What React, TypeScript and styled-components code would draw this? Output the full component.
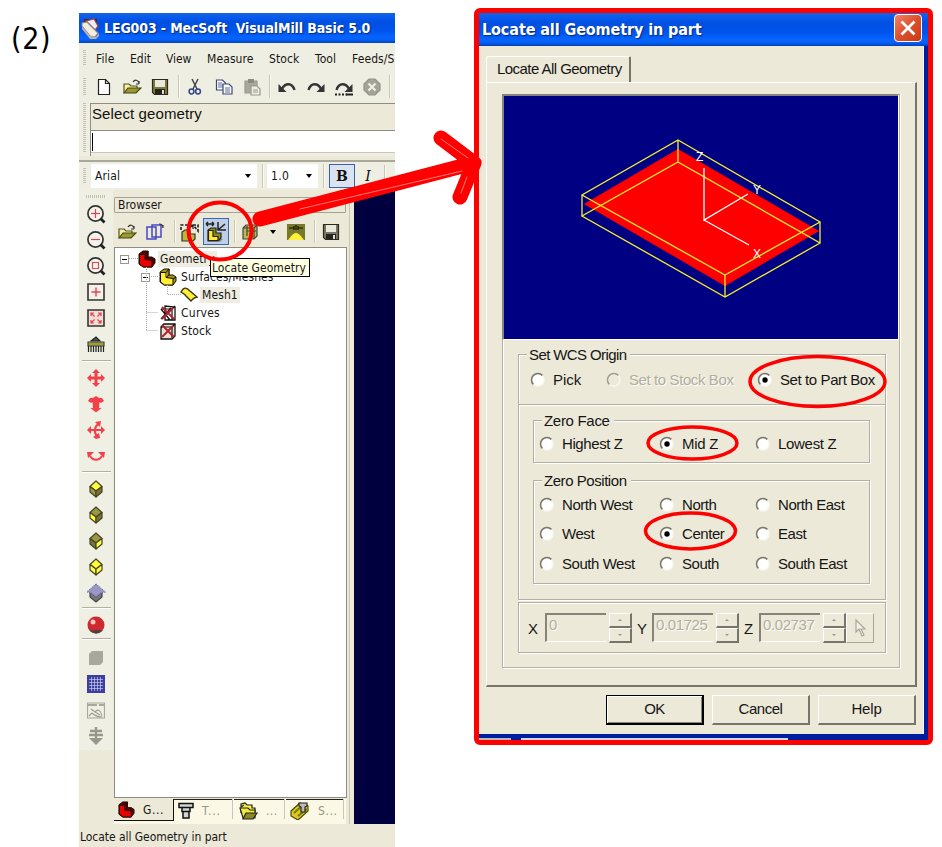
import React from "react";
import styled, { createGlobalStyle } from "styled-components";

const face = "#ece9d8";
const tahoma = `"DejaVu Sans Condensed", "DejaVu Sans", sans-serif`;
const sans = `"Liberation Sans", Arial, sans-serif`;

const GlobalStyle = createGlobalStyle`
  * { box-sizing: border-box; }
  body { margin: 0; background: #fff; overflow: hidden; }
`;

const Page = styled.main`
  position: relative;
  display: flex;
  align-items: flex-start;
  width: 942px;
  height: 847px;
  background: #fff;
  color: #111;
  overflow: hidden;
`;

const Text = styled.span<{ $ls?: number; $size?: number; $color?: string }>`
  font-family: ${tahoma};
  font-size: ${(p) => p.$size ?? 12}px;
  letter-spacing: ${(p) => p.$ls ?? 0}px;
  color: ${(p) => p.$color ?? "#161616"};
  white-space: pre;
  line-height: 16px;
`;

const Step = styled.div`
  width: 79px;
  padding: 20px 0 0 11px;
  font: 30px/38px ${tahoma};
  letter-spacing: 0.6px;
  color: #000;
`;

/* ---------- application window ---------- */

const MillWindow = styled.section`
  display: flex;
  flex-direction: column;
  width: 316px;
  height: 834px;
  margin-top: 13px;
  background: ${face};
  overflow: hidden;
`;

const TitleBar = styled.header<{ $h: number; $pad: number }>`
  display: flex;
  align-items: center;
  gap: 3px;
  flex: none;
  height: ${(p) => p.$h}px;
  padding-left: ${(p) => p.$pad}px;
  background: linear-gradient(#1763dc 0, #0a5cf0 12%, #0050e0 30%, #0054ee 60%, #0664ff 80%, #0560f5 90%, #0340b8 100%);
`;

const TitleText = styled.h1<{ $size: number; $ls: number }>`
  flex: 1;
  margin: 0;
  font: bold ${(p) => p.$size}px/20px "DejaVu Sans Condensed", sans-serif;
  letter-spacing: ${(p) => p.$ls}px;
  color: #fff;
  text-shadow: 1px 1px 1px #0a2a80;
  white-space: pre;
`;

const Grip = styled.i<{ $across?: boolean; $len: number }>`
  flex: none;
  width: ${(p) => (p.$across ? p.$len : 3)}px;
  height: ${(p) => (p.$across ? 3 : p.$len)}px;
  background: repeating-linear-gradient(${(p) => (p.$across ? "90deg" : "180deg")}, #c3c0b0 0 1px, #f3f1e6 1px 2px);
`;

const MenuBar = styled.nav`
  display: flex;
  align-items: center;
  flex: none;
  height: 29px;
  padding-left: 4px;
  background: #efeee2;
`;

const MenuItem = styled.span<{ $w: number }>`
  flex: none;
  width: ${(p) => p.$w}px;
`;

const ToolBar = styled.div`
  display: flex;
  align-items: center;
  flex: none;
  height: 29px;
  padding-left: 4px;
  background: #efeee2;
`;

const Slot = styled.span<{ $w: number }>`
  display: flex;
  justify-content: center;
  align-items: center;
  flex: none;
  width: ${(p) => p.$w}px;
`;

const VRule = styled.i<{ $h?: number }>`
  flex: none;
  width: 2px;
  height: ${(p) => p.$h ?? 23}px;
  border-left: 1px solid #c9c6b4;
  border-right: 1px solid #fbfaf2;
`;

const CommandArea = styled.div`
  display: flex;
  gap: 4px;
  flex: none;
  height: 55px;
  padding: 2px 0 0 4px;
  background: #efeee2;
`;

const CommandBox = styled.div`
  flex: 1;
  border-left: 1px solid #8f8d80;
`;

const Prompt = styled.div`
  height: 28px;
  padding: 1px 0 0 1px;
  border-top: 1px solid #8f8d80;
  border-bottom: 1px solid #8f8d80;
  background: ${face};
  font: 15px/18px ${sans};
  letter-spacing: 0.1px;
`;

const CommandInput = styled.div`
  display: flex;
  align-items: center;
  height: 22px;
  padding-left: 1px;
  border-bottom: 1px solid #c9c6b4;
  background: #fff;
`;

const Caret = styled.i`
  width: 1px;
  height: 18px;
  background: #000;
`;

const FontBar = styled.div`
  display: flex;
  align-items: center;
  flex: none;
  height: 30px;
  padding: 0 0 0 4px;
  margin-top: 4px;
  border-top: 2px solid #aaa899;
  background: #efeee2;
`;

const Combo = styled.div<{ $w: number }>`
  display: flex;
  align-items: center;
  justify-content: space-between;
  flex: none;
  width: ${(p) => p.$w}px;
  height: 24px;
  padding: 0 6px 0 4px;
  background: #fff;
`;

const Down = styled.i`
  border: 3px solid transparent;
  border-top: 4px solid #000;
  border-bottom: 0;
`;

const StyleButton = styled.span<{ $on?: boolean }>`
  display: flex;
  align-items: center;
  justify-content: center;
  width: 26px;
  height: 24px;
  border: 1px solid ${(p) => (p.$on ? "#3a5fae" : "transparent")};
  background: ${(p) => (p.$on ? "#dbe3f0" : "transparent")};
  font: ${(p) => (p.$on ? "900" : "italic 400")} 14px/20px "DejaVu Serif", serif;
`;

const Workspace = styled.div`
  display: flex;
  flex: none;
  height: 634px;
`;

const ToolStrip = styled.aside`
  display: flex;
  flex-direction: column;
  align-items: center;
  width: 34px;
  height: 560px;
  padding-top: 5px;
  background: #f0efe3;
`;

const ToolCell = styled.span<{ $h?: number }>`
  display: flex;
  align-items: center;
  justify-content: center;
  flex: none;
  height: ${(p) => p.$h ?? 26}px;
`;

const HRule = styled.i`
  flex: none;
  width: 29px;
  height: 2px;
  border-top: 1px solid #b4b1a2;
  border-bottom: 1px solid #fff;
`;

const BrowserPane = styled.section`
  display: flex;
  flex-direction: column;
  width: 237px;
  padding: 7px 3px 0 1px;
  border-right: 1px solid #c9c6b4;
`;

const PaneTitle = styled.div`
  display: flex;
  align-items: center;
  width: 232px;
  height: 16px;
  padding-left: 3px;
  border: 1px solid #a5a395;
  border-radius: 1px;
`;

const PaneTools = styled.div`
  display: flex;
  align-items: center;
  height: 34px;
  padding-top: 3px;
`;

const LocateButton = styled.span`
  display: flex;
  align-items: center;
  justify-content: center;
  width: 28px;
  height: 27px;
  border: 1px solid #3a66b8;
  background: #bfcfe8;
`;

const Tree = styled.div`
  position: relative;
  width: 233px;
  height: 551px;
  padding-top: 2px;
  border: 1px solid #8e8c80;
  background: #fff;
`;

const TreeRow = styled.div<{ $indent: number }>`
  display: flex;
  align-items: center;
  height: 18px;
  padding-left: ${(p) => p.$indent}px;
`;

const TreeIcon = styled.span`
  display: flex;
  justify-content: center;
  width: 18px;
  margin-right: 2px;
`;

const NodeLabel = styled(Text)<{ $hot?: boolean }>`
  padding: 0 2px;
  background: ${(p) => (p.$hot ? "#efede0" : "transparent")};
`;

const Expander = styled.i`
  width: 9px;
  height: 9px;
  margin-right: 9px;
  border: 1px solid #9a988c;
  background: linear-gradient(#000, #000) center / 5px 1px no-repeat #fff;
`;

const Guides = styled.svg`
  position: absolute;
  left: 0;
  top: 0;
`;

const Tooltip = styled.div`
  position: absolute;
  left: 95px;
  top: 10px;
  display: flex;
  align-items: center;
  width: 100px;
  height: 19px;
  padding: 1px 0 0 1px;
  border: 1px solid #000;
  background: #ffffe1;
`;

const TabRow = styled.div`
  display: flex;
  align-items: flex-start;
  height: 25px;
  margin-top: 1px;
  background: #fbf9e6;
`;

const Tab = styled.div<{ $w: number; $active?: boolean }>`
  display: flex;
  align-items: center;
  gap: 8px;
  flex: none;
  width: ${(p) => p.$w}px;
  height: 22px;
  padding-left: 4px;
  border-top: ${(p) => (p.$active ? "0" : "1px solid #222")};
  border-right: ${(p) => (p.$active ? "1px solid #111" : "0")};
  border-bottom: ${(p) => (p.$active ? "1px solid #111" : "0")};
  background: ${(p) => (p.$active ? face : "transparent")};
`;

const Viewport = styled.div`
  flex: 1;
  margin-left: 4px;
  background: #00003f;
  height: 634px;
`;

const Status = styled.footer`
  flex: 1;
  padding: 4px 0 0 1px;
  line-height: 16px;
`;

/* ---------- dialog ---------- */

const DialogFrame = styled.section`
  display: flex;
  flex-direction: column;
  flex: none;
  width: 459px;
  height: 737px;
  margin: 8px 0 0 79px;
  border: 5px solid #f00;
  border-radius: 6px;
  background: #001f9e;
`;

const CloseButton = styled.span`
  display: flex;
  align-items: center;
  justify-content: center;
  width: 28px;
  height: 28px;
  margin: -4px 6px 0 0;
  border: 1px solid #fff;
  border-radius: 4px;
  background: linear-gradient(135deg, #f08468, #dd4f2b 50%, #c43a15);
`;

const DialogBody = styled.div`
  width: 445px;
  height: 688px;
  padding: 10px 0 0 7px;
  background: ${face};
  border-right: 1px solid #fbfaf0;
`;

const PageTab = styled.div`
  width: 145px;
  height: 26px;
  padding: 3px 0 0 10px;
  border: 1px solid #fff;
  border-right: 2px solid #77756a;
  border-bottom: 0;
  border-radius: 3px 2px 0 0;
  background: ${face};
`;

const DialogText = styled.span<{ $ls?: number; $off?: boolean; $size?: number }>`
  font: ${(p) => p.$size ?? 15}px/18px ${sans};
  letter-spacing: ${(p) => p.$ls ?? 0}px;
  color: ${(p) => (p.$off ? "#b0ad9e" : "#161616")};
  text-shadow: ${(p) => (p.$off ? "1px 1px 0 #fff" : "none")};
  white-space: pre;
`;

const TabPage = styled.div`
  width: 431px;
  height: 605px;
  padding: 11px 15px 0;
  border: 1px solid #fff;
  border-right: 2px solid #77756a;
  border-bottom: 2px solid #77756a;
`;

const Inset = styled.div`
  width: 398px;
  height: 574px;
  border: 1px solid #b5b2a3;
  border-top: 0;
  box-shadow: 1px 1px 0 #fff, inset 1px 0 0 #fff, inset 0 -1px 0 ${face};
`;

const Preview = styled.svg`
  display: block;
  width: 397px;
  height: 246px;
  margin-left: -1px;
  border: 2px solid #85847c;
  border-right: 1px solid #fff;
  border-bottom: 1px solid #fff;
  background: #000082;
`;

const Group = styled.div<{ $w: number; $h: number; $mt: number; $ml: number }>`
  width: ${(p) => p.$w}px;
  height: ${(p) => p.$h}px;
  margin: ${(p) => p.$mt}px 0 0 ${(p) => p.$ml}px;
  border: 1px solid #b3b0a2;
  box-shadow: 1px 1px 0 #fff, inset 1px 1px 0 #fff;
`;

const Legend = styled.div`
  width: max-content;
  height: 18px;
  margin: -9px 0 0 8px;
  padding: 0 4px 0 2px;
  background: ${face};
`;

const Choices = styled.div<{ $cols: string; $row: number; $mt: number; $mb?: number; $ml: number }>`
  display: grid;
  grid-template-columns: ${(p) => p.$cols};
  grid-auto-rows: ${(p) => p.$row}px;
  align-items: center;
  margin: ${(p) => p.$mt}px 0 ${(p) => p.$mb ?? 0}px ${(p) => p.$ml}px;
`;

const Choice = styled.label`
  display: flex;
  align-items: center;
  gap: 7px;
`;

const Divider = styled.div`
  height: 2px;
  border-top: 1px solid #b3b0a2;
  border-bottom: 1px solid #fff;
`;

const CoordRow = styled.div`
  display: flex;
  align-items: center;
  height: 49px;
  padding-left: 9px;
`;

const Axis = styled.span<{ $w: number }>`
  width: ${(p) => p.$w}px;
  padding-top: 2px;
`;

const Field = styled.span`
  width: 61px;
  height: 29px;
  padding: 1px 0 0 2px;
  border: 2px solid #85837a;
  border-right: 0;
  border-bottom: 1px solid #fff;
`;

const Spinner = styled.span`
  display: flex;
  flex-direction: column;
  width: 23px;
  margin: 0 0 0 3px;
`;

const SpinButton = styled.span<{ $dir: "up" | "down" }>`
  display: flex;
  align-items: center;
  justify-content: center;
  height: 15px;
  border: 1px solid #fff;
  border-right: 2px solid #77756a;
  border-bottom: 2px solid #77756a;
  &::after {
    content: "";
    border: 2px solid transparent;
    border-${(p) => (p.$dir === "up" ? "bottom" : "top")}-color: #99968a;
    border-${(p) => (p.$dir === "up" ? "top" : "bottom")}-width: 0;
  }
`;

const PickButton = styled.span`
  display: flex;
  align-items: center;
  justify-content: center;
  width: 28px;
  height: 30px;
  border: 1px solid #fff;
  border-right-color: #a9a698;
  border-bottom-color: #a9a698;
`;

const Actions = styled.div`
  display: flex;
  gap: 8px;
  margin: 8px 0 0 120px;
`;

const Action = styled.button<{ $primary?: boolean }>`
  width: 98px;
  height: 30px;
  padding: 0 0 2px;
  border: ${(p) => (p.$primary ? "1px solid #000" : "1px solid #fff")};
  border-right: 2px solid ${(p) => (p.$primary ? "#000" : "#77756a")};
  border-bottom: 2px solid ${(p) => (p.$primary ? "#000" : "#77756a")};
  box-shadow: ${(p) => (p.$primary ? "inset 1px 1px 0 #fff, inset -1px -1px 0 #8a887c" : "none")};
  background: ${face};
`;

const LowerEdge = styled.div`
  display: flex;
  gap: 10px;
  margin-top: 4px;
  height: 2px;
`;

const EdgePiece = styled.i<{ $w: number; $c: string }>`
  width: ${(p) => p.$w}px;
  background: ${(p) => p.$c};
`;

const Annotations = styled.svg`
  position: absolute;
  inset: 0;
  pointer-events: none;
`;

/* ---------- icons ---------- */

type Kids = { w?: number; h?: number; children: React.ReactNode };
const Icon = ({ w = 18, h = 18, children }: Kids) => (
  <svg width={w} height={h} viewBox={`0 0 ${w} ${h}`} fill="none" stroke="#222" strokeWidth="1.2">
    {children}
  </svg>
);

const AppIcon = () => (
  <Icon w={20} h={22}>
    <path d="M3 2h13v9H3z" fill="#4a2a18" stroke="none" />
    <path d="M5 4l8-2 4 7-3 4z" fill="#eee" stroke="#a44" />
    <path d="M1 6l5-1 11 11-3 4-5-1L1 9z" fill="#f2eee6" stroke="#888" />
    <path d="M1 9l8 10 6 1 3-4v3l-3 3H9L1 12z" fill="#b9b2a6" stroke="none" />
  </Icon>
);
const NewIcon = () => (
  <Icon><path d="M3.500 1.500h7l4 4v11h-11z" fill="#fff" /><path d="M10.500 1.500v4h4" /></Icon>
);
const OpenIcon = () => (
  <Icon w={20}>
    <path d="M2 15V6h5l2 2h6v3" fill="#f4f0a8" stroke="#55551e" />
    <path d="M2 15l4-5h13l-5 5z" fill="#9a9a30" stroke="#44440f" />
    <path d="M11 4c2-3 5-2 6 1M17 6v-3M17 6h-3" stroke="#333" />
  </Icon>
);
const SaveIcon = ({ dim }: { dim?: boolean }) => (
  <Icon>
    <path d="M1.5 1.5h15v15h-13l-2-2z" fill={dim ? "#77766a" : "#7b7a3c"} stroke="#2b2b18" />
    <path d="M4 2h10v7H4z" fill="#e9e8dc" stroke="none" />
    <path d="M4 11h10v5H4z" fill="#25251c" stroke="none" /><path d="M11 12h2v4h-2z" fill="#ddd" stroke="none" />
  </Icon>
);
const CutIcon = () => (
  <Icon>
    <path d="M6 1l5 10M12 1L7 11" stroke="#444" strokeWidth="1.5" />
    <circle cx="5.5" cy="13.5" r="2.4" stroke="#33468c" strokeWidth="1.5" />
    <circle cx="12" cy="13.5" r="2.4" stroke="#33468c" strokeWidth="1.5" />
  </Icon>
);
const CopyIcon = () => (
  <Icon>
    <path d="M1.5 2h6l3 3v7h-9z" fill="#fff" stroke="#3c4775" /><path d="M3 5h4M3 7h6M3 9h6" stroke="#5b68a0" />
    <path d="M8 6h6l3 3v7H8z" fill="#fff" stroke="#3c4775" /><path d="M10 10h5M10 12h5M10 14h5" stroke="#5b68a0" />
  </Icon>
);
const PasteIcon = () => (
  <Icon>
    <path d="M2 3h12v12H2z" fill="#aaa89b" stroke="#9b998d" /><path d="M5 1h6v4H5z" fill="#8d8b80" stroke="none" />
    <path d="M8 8h6l3 3v6H8z" fill="#efeee4" stroke="#9b998d" /><path d="M10 12h5M10 14h5" stroke="#9b998d" />
  </Icon>
);
const UndoIcon = ({ flip, dots }: { flip?: boolean; dots?: boolean }) => (
  <Icon w={20}>
    <g transform={flip ? "translate(20 0) scale(-1 1)" : undefined}>
      <path d="M1.500 6v8h8z" fill="#333" stroke="none" />
      <path d="M5 11C8 5 15 4 17.500 12" stroke="#333" strokeWidth="2.400" />
    </g>
    {dots && <path d="M1 16.5h12" stroke="#222" strokeWidth="2" strokeDasharray="2 1.5" />}
    {dots && <path d="M12 16.5h7" stroke="#222" strokeWidth="2" />}
  </Icon>
);
const StopIcon = () => (
  <Icon>
    <path d="M6 1h6l5 5v6l-5 5H6l-5-5V6z" fill="#a5a498" stroke="#969489" />
    <path d="M5.5 5.5l7 7M12.5 5.5l-7 7" stroke="#f2f1e8" strokeWidth="2" />
  </Icon>
);

const Zoom = ({ kind }: { kind: "plus" | "minus" | "box" }) => (
  <Icon w={20} h={20}>
    <circle cx="9.5" cy="9.5" r="7.600" fill="#f6f3ec" stroke="#333" strokeWidth="1.700" />
    <path d="M14.500 14.500l4 4" stroke="#222" strokeWidth="2.800" />
    {kind === "box" ? <path d="M6.5 6.5h6v6h-6z" stroke="#d2505a" /> : <path d="M5 9.5h9" stroke="#e04450" />}
    {kind === "plus" && <path d="M9.5 5v9" stroke="#e04450" />}
  </Icon>
);
const PanBox = () => (
  <Icon><path d="M1 1h16v16H1z" fill="#f6f0e8" stroke="#333" strokeWidth="1.6" /><path d="M4.5 9h9M9 4.5v9" stroke="#e04450" strokeWidth="1.4" /></Icon>
);
const FitBox = () => (
  <Icon>
    <path d="M1 1h16v16H1z" fill="#f3dcd4" stroke="#333" strokeWidth="1.6" />
    <path d="M4 7V4h3M4 4l3.500 3.500M14 7V4h-3M14 4l-3.500 3.500M4 11v3h3M4 14l3.500-3.500M14 11v3h-3M14 14l-3.500-3.500" stroke="#d64a52" />
  </Icon>
);
const Brush = () => (
  <Icon>
    <path d="M4 6l5-4 4 4z" fill="#555" stroke="#222" />
    <path d="M1 7h16v4H1z" fill="#9a9f3c" stroke="#444" />
    <path d="M1.500 11v6M4 11v6M6.500 11v6M9 11v6M11.500 11v6M14 11v6M16.500 11v6" stroke="#222" />
  </Icon>
);
const red = "#f44149";
const Move = () => (
  <Icon><path d="M9 0l4 4h-2.500v3.500H14V5l4 4-4 4v-2.500h-3.500V14H13l-4 4-4-4h2.500v-3.500H4V13L0 9l4-4v2.500h3.500V4H5z" fill={red} stroke="none" /></Icon>
);
const ZoomDrag = () => (
  <Icon><path d="M9 1l3 2h3l2 3-3 2-1.500-1L12 13h2.500L9 17.500 3.500 13H6L5.500 7 4 8 1 6l2-3h3z" fill={red} stroke="none" /></Icon>
);
const Rotate = () => (
  <Icon>
    <path d="M3 9h12M12 3c-5 2-5 9-2 12" stroke={red} strokeWidth="2.200" />
    <path d="M0 9l4-4v8zM18 9l-4-4v8zM8 1l6-1-1 6zM6 16l6-4 1 5-4 1z" fill={red} stroke="none" />
  </Icon>
);
const Spin = () => (
  <Icon><path d="M3 9c3 5 9 5 12 0" stroke={red} strokeWidth="2.200" /><path d="M0 5h7L1 11zM18 5h-7l6 6z" fill={red} stroke="none" /></Icon>
);
const Cube = ({ top, left, right }: { top: string; left: string; right: string }) => (
  <Icon w={16} h={18}>
    <g stroke="#44442a" strokeLinejoin="round">
      <path d="M8 1l6 5.500-6 4.500-6-4.500z" fill={top} /><path d="M2 6.500L8 11v6l-6-5z" fill={left} /><path d="M14 6.500L8 11v6l6-5z" fill={right} />
    </g>
  </Icon>
);
const HatchedCube = () => (
  <Icon w={20} h={20}>
    <path d="M4 9l6 5 6-5v5l-6 5-6-5z" fill="#777870" stroke="#444" />
    <path d="M10 1l9 8-4 1-5 4-5-4-4-1z" fill="#9799c4" stroke="#6b6ea6" strokeDasharray="1 1" />
  </Icon>
);
const Ball = () => (
  <Icon w={20} h={20}>
    <circle cx="10" cy="10" r="8.500" fill="#cf2a30" stroke="none" />
    <path d="M2 12a8.500 8.500 0 0 0 15 3c-3 1-5-1-8 0s-5 0-7-3z" fill="#55403c" stroke="none" />
    <circle cx="7" cy="7" r="2.500" fill="#ffc4c0" stroke="none" />
  </Icon>
);
const Solid = () => (<Icon w={16} h={16}><path d="M1 4l3-3h11v11l-3 3H1z" fill="#a9a89b" stroke="none" /></Icon>);
const Grid = () => (
  <Icon>
    <path d="M0 0h18v18H0z" fill="#3b3f9f" stroke="none" />
    <path d="M2 4.500h14M2 7.500h14M2 10.500h14M2 13.500h14M4.500 2v14M7.500 2v14M10.500 2v14M13.500 2v14" stroke="#b9bbe0" strokeWidth=".8" />
  </Icon>
);
const Sketch = () => (
  <Icon>
    <path d="M.500 2h17v15H.500z" stroke="#aaa89c" /><path d="M1 4h16" stroke="#aaa89c" strokeWidth="2" strokeDasharray="9 2" />
    <path d="M2 15l3-3M4 8l4 3c3-4 6-1 7 4M5 12c3 3 7 4 10 4M8 11l5 3" stroke="#a09e92" />
  </Icon>
);
const DropArrow = () => (
  <Icon><path d="M9 0v13M3 4h12M2 8h14" stroke="#999789" strokeWidth="2.400" /><path d="M2 11h14l-7 7z" fill="#999789" stroke="none" /></Icon>
);

const Block = ({ c = "#ea0000", d = "#5a0000", s = 18 }: { c?: string; d?: string; s?: number }) => (
  <svg width={s} height={s} viewBox="0 0 18 18" strokeLinejoin="round" stroke="#1c0c00" strokeWidth="1">
    <path d="M1 4l4-3h5v6h4l3 2v4l-3 4H5l-4-3z" fill={d} />
    <path d="M1.500 4.500H7v5l7 1V17H5.500l-4-3z" fill={c} /><path d="M7 4.500L10 1v6L7 9.500M14 11l3-2" fill={d} />
  </svg>
);
const Mesh = () => (
  <Icon><path d="M1 7c3-6 6-4 9-1l7 6c-3 0-4 2-6 4L6 11C4 8 3 9 1 7z" fill="#ffee38" stroke="#3b3510" strokeWidth="1.400" transform="translate(0 -1)" /></Icon>
);
const Crossed = ({ filled }: { filled?: boolean }) => (
  <Icon>
    <path d={filled ? "M2 5l3-3h11v12l-3 3H2z" : "M6 2v14h10V3zM2 5l9 11M2 15l10-11"} fill={filled ? "#e9dfd4" : "none"} stroke="#111" strokeWidth="1.300" />
    <path d="M2 5h11v11M13 5l3-3" stroke="#111" /><path d="M3 3l12 12M14 4L3 15" stroke="#b5222c" strokeWidth="2" />
  </Icon>
);
const CloneIcon = () => (
  <Icon w={20}>
    <path d="M2 4h9v12H2zM7 2h9v12H7z" fill="none" stroke="#4548c4" strokeWidth="1.500" /><path d="M14 1c3 0 4 1 4 4M18 5v-3" stroke="#333" />
  </Icon>
);
const TransformIcon = () => (
  <Icon w={22} h={20}>
    <path d="M2 8V3h8M14 3h5v6l-4-5" stroke="#222" strokeDasharray="3 1.500" strokeWidth="1.600" />
    <path d="M3 10l3-2h5v4h5v5l-2 2H3z" fill="#b8ba38" stroke="#333" /><path d="M8 8l6-5M14 3v4M14 3h-4" />
  </Icon>
);
const LocateIcon = () => (
  <Icon w={24} h={22}>
    <path d="M2 3h8M2 3l2-2M2 3l2 2M10 3L8 1M10 3L8 5M14 1v8h8M14 9l7-6" stroke="#222" strokeWidth="1.500" />
    <path d="M9 18h10l-3 3z" fill="#889" stroke="none" />
    <path d="M4 9l3-2h5v5h5v5l-3 3H4z" fill="#8a8a1c" stroke="#222" /><path d="M4.500 9.500H9v6h5v4H4.500z" fill="#ffec32" stroke="#222" />
  </Icon>
);
const BoxIcon = () => (
  <Icon><path d="M2 5l3-3h11v11l-3 3H2z" fill="#b9bb48" stroke="#444" /><path d="M2 5h11v11M13 5l3-3M6 3v10M6 8h9" stroke="#444" /></Icon>
);
const SplitIcon = () => (
  <Icon>
    <path d="M0 1h18v16H0z" fill="#77782a" stroke="none" /><path d="M1 17l4-5 3-2h2l3 2 4 5z" fill="#ffee3c" stroke="none" />
    <path d="M2 5h5M11 5h5M9 2v5M7 3v4M11 3v4" stroke="#16160a" />
  </Icon>
);
const ToolTabIcon = () => (
  <Icon w={16}><path d="M1 1.500h14v4H1zM4 5.500h8v4H4zM5 9.500h6V16H5z" fill="#d4d4d0" stroke="#111" strokeWidth="1.500" /></Icon>
);
const FolderTabIcon = () => (
  <Icon w={20}><path d="M3 11V2l4-1 2 2h5v3h3v4M3 5l3-2" fill="#fbf04a" stroke="#222" /><path d="M2 6h8l2 2h5v8H5z" fill="#f2e840" stroke="#222" /><path d="M8 11h11l-4 6H5z" fill="#8c8a1e" stroke="#222" /></Icon>
);
const StockTabIcon = () => (
  <Icon w={20}><path d="M1 9l9-8 8 3v5l-10 9-7-4z" fill="#d7cb20" stroke="#4b460c" /><path d="M4 11l9-8M8 14l9-7" stroke="#7f7810" strokeWidth="2" /><path d="M9 1h8v3l-2 1v5h-4V5L9 4z" fill="#bbb" stroke="#222" /></Icon>
);

const Radio = ({ on, off }: { on?: boolean; off?: boolean }) => (
  <svg width="16" height="16" viewBox="0 0 16 16" fill="none" style={undefined}>
    <circle cx="8" cy="8" r="6" fill={off ? face : "#fff"} stroke="#f9f8f1" strokeWidth="1.500" />
    <path d="M3.400 12.400A6 6 0 0 1 12.400 3.400" stroke={off ? "#9d9b90" : "#77756c"} strokeWidth="1.500" />
    {on && <circle cx="8" cy="8" r="2.700" fill="#000" />}
  </svg>
);

const RadioBox = styled.span`
  display: flex;
  flex: none;
  width: 16px;
`;

/* ---------- data ---------- */

const menus: [string, number, number][] = [
  ["File", 34, 0.1], ["Edit", 36, 0], ["View", 41, -0.1], ["Measure", 62, 0.1], ["Stock", 46, 0.1], ["Tool", 37, 0.1], ["Feeds/S", 60, 0.1],
];

const positions = [
  ["North West", "North", "North East"],
  ["West", "Center", "East"],
  ["South West", "South", "South East"],
];

const Option = ({ label, on, off, ls = 0 }: { label: string; on?: boolean; off?: boolean; ls?: number }) => (
  <Choice>
    <RadioBox><Radio on={on} off={off} /></RadioBox>
    <DialogText $off={off} $ls={ls}>{label}</DialogText>
  </Choice>
);

const Coordinate = ({ axis, value, w }: { axis: string; value: string; w: number }) => (
  <>
    <Axis $w={w}><DialogText>{axis}</DialogText></Axis>
    <Field><DialogText $off $ls={-0.4}>{value}</DialogText></Field>
    <Spinner><SpinButton $dir="up" /><SpinButton $dir="down" /></Spinner>
  </>
);

const olive = "#99973f";
const yellow = "#ffff3a";

export default function App() {
  return (
    <Page>
      <GlobalStyle />
      <Step>(2)</Step>

      <MillWindow>
        <TitleBar $h={30} $pad={2}>
          <AppIcon />
          <TitleText $size={14} $ls={-0.12}>{"LEG003 - MecSoft  VisualMill Basic 5.0"}</TitleText>
        </TitleBar>
        <MenuBar>
          <Grip $len={16} />
          <MenuItem $w={10} />
          {menus.map(([name, w, ls]) => (
            <MenuItem key={name} $w={w}><Text $ls={ls}>{name}</Text></MenuItem>
          ))}
        </MenuBar>
        <ToolBar>
          <Grip $len={18} />
          <Slot $w={4} />
          <Slot $w={28}><NewIcon /></Slot>
          <Slot $w={28}><OpenIcon /></Slot>
          <Slot $w={28}><SaveIcon /></Slot>
          <Slot $w={4} /><VRule />
          <Slot $w={30}><CutIcon /></Slot>
          <Slot $w={28}><CopyIcon /></Slot>
          <Slot $w={28}><PasteIcon /></Slot>
          <Slot $w={3} /><VRule />
          <Slot $w={31}><UndoIcon /></Slot>
          <Slot $w={28}><UndoIcon flip /></Slot>
          <Slot $w={28}><UndoIcon flip dots /></Slot>
          <Slot $w={27}><StopIcon /></Slot>
          <Slot $w={4} /><VRule />
        </ToolBar>
        <CommandArea>
          <Grip $len={50} />
          <CommandBox>
            <Prompt>Select geometry</Prompt>
            <CommandInput><Caret /></CommandInput>
          </CommandBox>
        </CommandArea>
        <FontBar>
          <Grip $len={16} />
          <Slot $w={5} />
          <Combo $w={166}><Text $ls={0.15}>Arial</Text><Down /></Combo>
          <Slot $w={5} /><VRule $h={24} /><Slot $w={3} />
          <Combo $w={51}><Text $ls={0.4}>1.0</Text><Down /></Combo>
          <Slot $w={5} /><VRule $h={24} /><Slot $w={4} />
          <StyleButton $on>B</StyleButton>
          <StyleButton>I</StyleButton>
          <Slot $w={3} /><VRule />
        </FontBar>

        <Workspace>
          <ToolStrip>
            <Grip $across $len={20} />
            <Slot $w={1} />
            <ToolCell $h={32}><Zoom kind="plus" /></ToolCell>
            <ToolCell $h={20}><Zoom kind="minus" /></ToolCell>
            <ToolCell $h={32}><Zoom kind="box" /></ToolCell>
            <ToolCell $h={20}><PanBox /></ToolCell>
            <ToolCell $h={32}><FitBox /></ToolCell>
            <ToolCell $h={20}><Brush /></ToolCell>
            <ToolCell $h={6} /><HRule /><ToolCell $h={3} />
            <ToolCell><Move /></ToolCell>
            <ToolCell><ZoomDrag /></ToolCell>
            <ToolCell><Rotate /></ToolCell>
            <ToolCell><Spin /></ToolCell>
            <ToolCell $h={2} /><HRule /><ToolCell $h={3} />
            <ToolCell><Cube top={yellow} left={olive} right="#77752f" /></ToolCell>
            <ToolCell><Cube top={olive} left={yellow} right="#77752f" /></ToolCell>
            <ToolCell><Cube top={olive} left="#77752f" right={yellow} /></ToolCell>
            <ToolCell><Cube top={yellow} left={yellow} right={yellow} /></ToolCell>
            <ToolCell><HatchedCube /></ToolCell>
            <ToolCell $h={1} /><HRule /><ToolCell $h={3} />
            <ToolCell><Ball /></ToolCell>
            <HRule /><ToolCell $h={5} />
            <ToolCell><Solid /></ToolCell>
            <ToolCell><Grid /></ToolCell>
            <ToolCell><Sketch /></ToolCell>
            <ToolCell><DropArrow /></ToolCell>
          </ToolStrip>

          <BrowserPane>
            <PaneTitle><Text>Browser</Text></PaneTitle>
            <PaneTools>
              <Slot $w={25}><OpenIcon /></Slot>
              <Slot $w={31}><CloneIcon /></Slot>
              <Slot $w={4} /><VRule />
              <Slot $w={27}><TransformIcon /></Slot>
              <LocateButton><LocateIcon /></LocateButton>
              <Slot $w={5} /><VRule /><Slot $w={2} />
              <Slot $w={24}><BoxIcon /></Slot>
              <Slot $w={22}><Down /></Slot>
              <Slot $w={24}><SplitIcon /></Slot>
              <Slot $w={6} /><VRule />
              <Slot $w={30}><SaveIcon dim /></Slot>
            </PaneTools>
            <Tree>
              <Guides width="90" height="90" fill="none" stroke="#aaa" strokeDasharray="1 1">
                <path d="M14 10.500h10M31.500 19v63.500M36 28.500h10M52.500 37v9.500h14M31.500 64.500h12M31.500 82.500h12" />
              </Guides>
              <TreeRow $indent={5}>
                <Expander /><TreeIcon><Block /></TreeIcon><NodeLabel $hot $ls={0.1}>Geometry</NodeLabel>
              </TreeRow>
              <TreeRow $indent={26}>
                <Expander /><TreeIcon><Block c="#fff034" d="#9b981e" /></TreeIcon><NodeLabel $ls={0.1}>Surfaces/Meshes</NodeLabel>
              </TreeRow>
              <TreeRow $indent={65}>
                <TreeIcon><Mesh /></TreeIcon><NodeLabel $hot $ls={0.1}>Mesh1</NodeLabel>
              </TreeRow>
              <TreeRow $indent={44}>
                <TreeIcon><Crossed /></TreeIcon><NodeLabel $ls={0.25}>Curves</NodeLabel>
              </TreeRow>
              <TreeRow $indent={44}>
                <TreeIcon><Crossed filled /></TreeIcon><NodeLabel $ls={0.1}>Stock</NodeLabel>
              </TreeRow>
              <Tooltip><Text $ls={0.05}>Locate Geometry</Text></Tooltip>
            </Tree>
            <TabRow>
              <Tab $w={60} $active><Block s={17} /><Text $ls={0.6}>G...</Text></Tab>
              <Tab $w={58}><ToolTabIcon /><Text $color="#969485" $ls={0.8}>T...</Text></Tab>
              <VRule $h={20} />
              <Tab $w={50}><FolderTabIcon /><Text $color="#969485" $ls={0.4}>...</Text></Tab>
              <VRule $h={20} />
              <Tab $w={57}><StockTabIcon /><Text $color="#969485" $ls={0.6}>S...</Text></Tab>
              <VRule $h={20} />
            </TabRow>
          </BrowserPane>
          <Viewport />
        </Workspace>
        <Status><Text $ls={-0.05}>Locate all Geometry in part</Text></Status>
      </MillWindow>

      <DialogFrame>
        <TitleBar $h={33} $pad={3}>
          <TitleText $size={16} $ls={-0.1}>Locate all Geometry in part</TitleText>
          <CloseButton>
            <svg width="16" height="16" stroke="#fff" strokeWidth="2.800"><path d="M1.500 1.500l13 13M14.500 1.500l-13 13" /></svg>
          </CloseButton>
        </TitleBar>
        <DialogBody>
          <PageTab><DialogText $ls={-0.55}>Locate All Geometry</DialogText></PageTab>
          <TabPage>
            <Inset>
              <Preview viewBox="504 96 394 243" preserveAspectRatio="none">
                <path d="M678 149L584 204l141 82 94-55z" fill="#f00" />
                <g fill="none" stroke="#f4f02c" strokeWidth="1.300">
                  <path d="M678 140l142 82-95 53-143-80zM678 162l142 81-95 54-143-81zM678 140v22M820 222v21M725 275v22M582 195v21" />
                </g>
                <path d="M704 168v52l44-26M704 220l45 25" fill="none" stroke="#fff" strokeWidth="1.300" />
                <g fill="#fff" fontFamily="Liberation Sans" fontSize="12">
                  <text x="696" y="161">Z</text><text x="753" y="194">Y</text><text x="753" y="258">X</text>
                </g>
              </Preview>
              <Group $w={368} $h={246} $mt={14} $ml={15}>
                <Legend><DialogText $ls={-0.6}>Set WCS Origin</DialogText></Legend>
                <Choices $cols="76px 151px 120px" $row={18} $mt={7} $mb={15} $ml={11}>
                  <Option label="Pick" />
                  <Option label="Set to Stock Box" off ls={-0.4} />
                  <Option label="Set to Part Box" on ls={-0.4} />
                </Choices>
                <Divider />
                <Group $w={337} $h={43} $mt={14} $ml={14}>
                  <Legend><DialogText $ls={-0.3}>Zero Face</DialogText></Legend>
                  <Choices $cols="120px 96px 110px" $row={18} $mt={5} $ml={5}>
                    <Option label="Highest Z" ls={-0.4} />
                    <Option label="Mid Z" on ls={-0.3} />
                    <Option label="Lowest Z" ls={-0.3} />
                  </Choices>
                </Group>
                <Group $w={337} $h={104} $mt={17} $ml={14}>
                  <Legend><DialogText $ls={-0.45}>Zero Position</DialogText></Legend>
                  <Choices $cols="120px 96px 110px" $row={29.5} $mt={0} $ml={5}>
                    {positions.flat().map((p) => (
                      <Option key={p} label={p} on={p === "Center"} ls={-0.45} />
                    ))}
                  </Choices>
                </Group>
              </Group>
              <Group $w={368} $h={51} $mt={2} $ml={15}>
                <CoordRow>
                  <Coordinate axis="X" value="0" w={17} />
                  <Slot $w={5} />
                  <Coordinate axis="Y" value="0.01725" w={15} />
                  <Slot $w={5} />
                  <Coordinate axis="Z" value="0.02737" w={15} />
                  <PickButton>
                    <Icon w={14} h={20}><path d="M3 2v12l3-3 3 7 2-1-3-6h4z" fill="#f4f2e8" stroke="#aaa798" /></Icon>
                  </PickButton>
                </CoordRow>
              </Group>
            </Inset>
          </TabPage>
          <Actions>
            <Action $primary><DialogText $ls={-0.6}>OK</DialogText></Action>
            <Action><DialogText $ls={-0.45}>Cancel</DialogText></Action>
            <Action><DialogText $ls={-0.2}>Help</DialogText></Action>
          </Actions>
        </DialogBody>
        <LowerEdge>
          <EdgePiece $w={32} $c="#b9b8b8" />
          <EdgePiece $w={267} $c="#cfd6ee" />
        </LowerEdge>
      </DialogFrame>

      <Annotations width="942" height="847" fill="none" stroke="#f00" strokeLinecap="round" strokeLinejoin="round">
        <ellipse cx="220" cy="231" rx="31.500" ry="28.500" strokeWidth="4" />
        <ellipse cx="817.500" cy="381.500" rx="67.500" ry="25" strokeWidth="3.500" />
        <ellipse cx="692.500" cy="443" rx="44.500" ry="16" strokeWidth="3.500" />
        <ellipse cx="690.500" cy="531" rx="45" ry="18" strokeWidth="3.500" />
        <path d="M260 219L474 163M441 138l33 25-14 34" strokeWidth="15" />
        <path d="M300 209L462 171M441 139l27 19M467 177l-6 16" stroke="#ff9a96" strokeWidth=".8" />
      </Annotations>
    </Page>
  );
}
